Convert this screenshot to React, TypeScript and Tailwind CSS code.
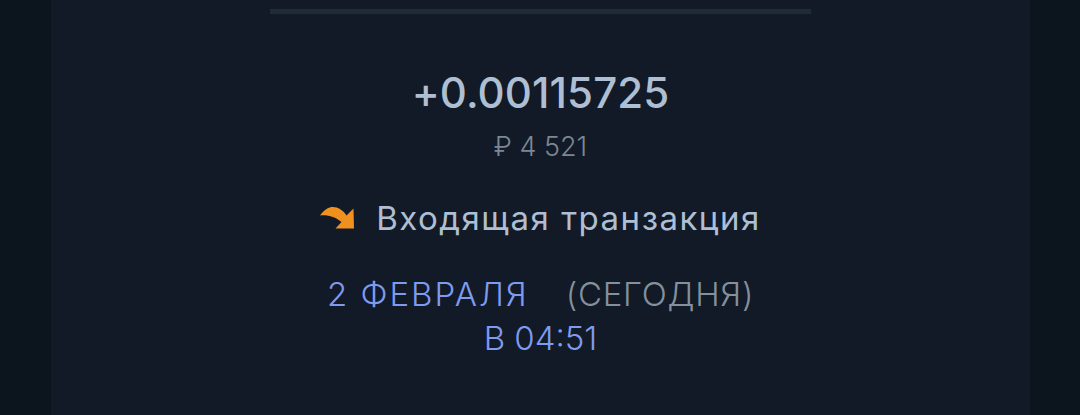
const App = () => {
  return (
    <div className="h-[415px] w-[1080px] overflow-hidden bg-[#0c151d] font-['Inter',sans-serif]">
      <div className="ml-[51px] flex h-full w-[979px] flex-col items-center bg-[#121a27]">
        <div className="mt-[9px] h-[5px] w-[541px] bg-[#1f2c38]" />
        <div className="mt-[52px] text-[42px] leading-[54px] font-medium tracking-[0.1px] text-[#aebfd3]">+0.00115725</div>
        <div className="mt-[10px] text-[27px] leading-[34px] font-light text-[#7a8896]">₽ 4 521</div>
        <div className="mt-[35px] flex items-center">
          <svg width="34" height="22" viewBox="0 0 34 22" className="mr-[22px]">
            <path
              d="M0 8.5C4 2.5 9 0 13 0C18 0 23 3 26.5 8.5L33.5 1.5L34 21.5H15.5L21.5 15C15 9.5 7 7.5 0 8.5Z"
              fill="#f0901e"
            />
          </svg>
          <span className="text-[33px] leading-[38px] tracking-[1.5px] text-[#aebfd3]">Входящая транзакция</span>
        </div>
        <div className="mt-[37px] flex text-[33px] leading-[40px] font-light">
          <span className="tracking-[2px] text-[#7f9bf0]">2 ФЕВРАЛЯ</span>
          <span className="ml-[37px] tracking-[0.7px] text-[#84919d]">(СЕГОДНЯ)</span>
        </div>
        <div className="mt-[4px] text-[33px] leading-[40px] font-light text-[#7f9bf0]">В 04:51</div>
      </div>
    </div>
  );
};

export default App;
